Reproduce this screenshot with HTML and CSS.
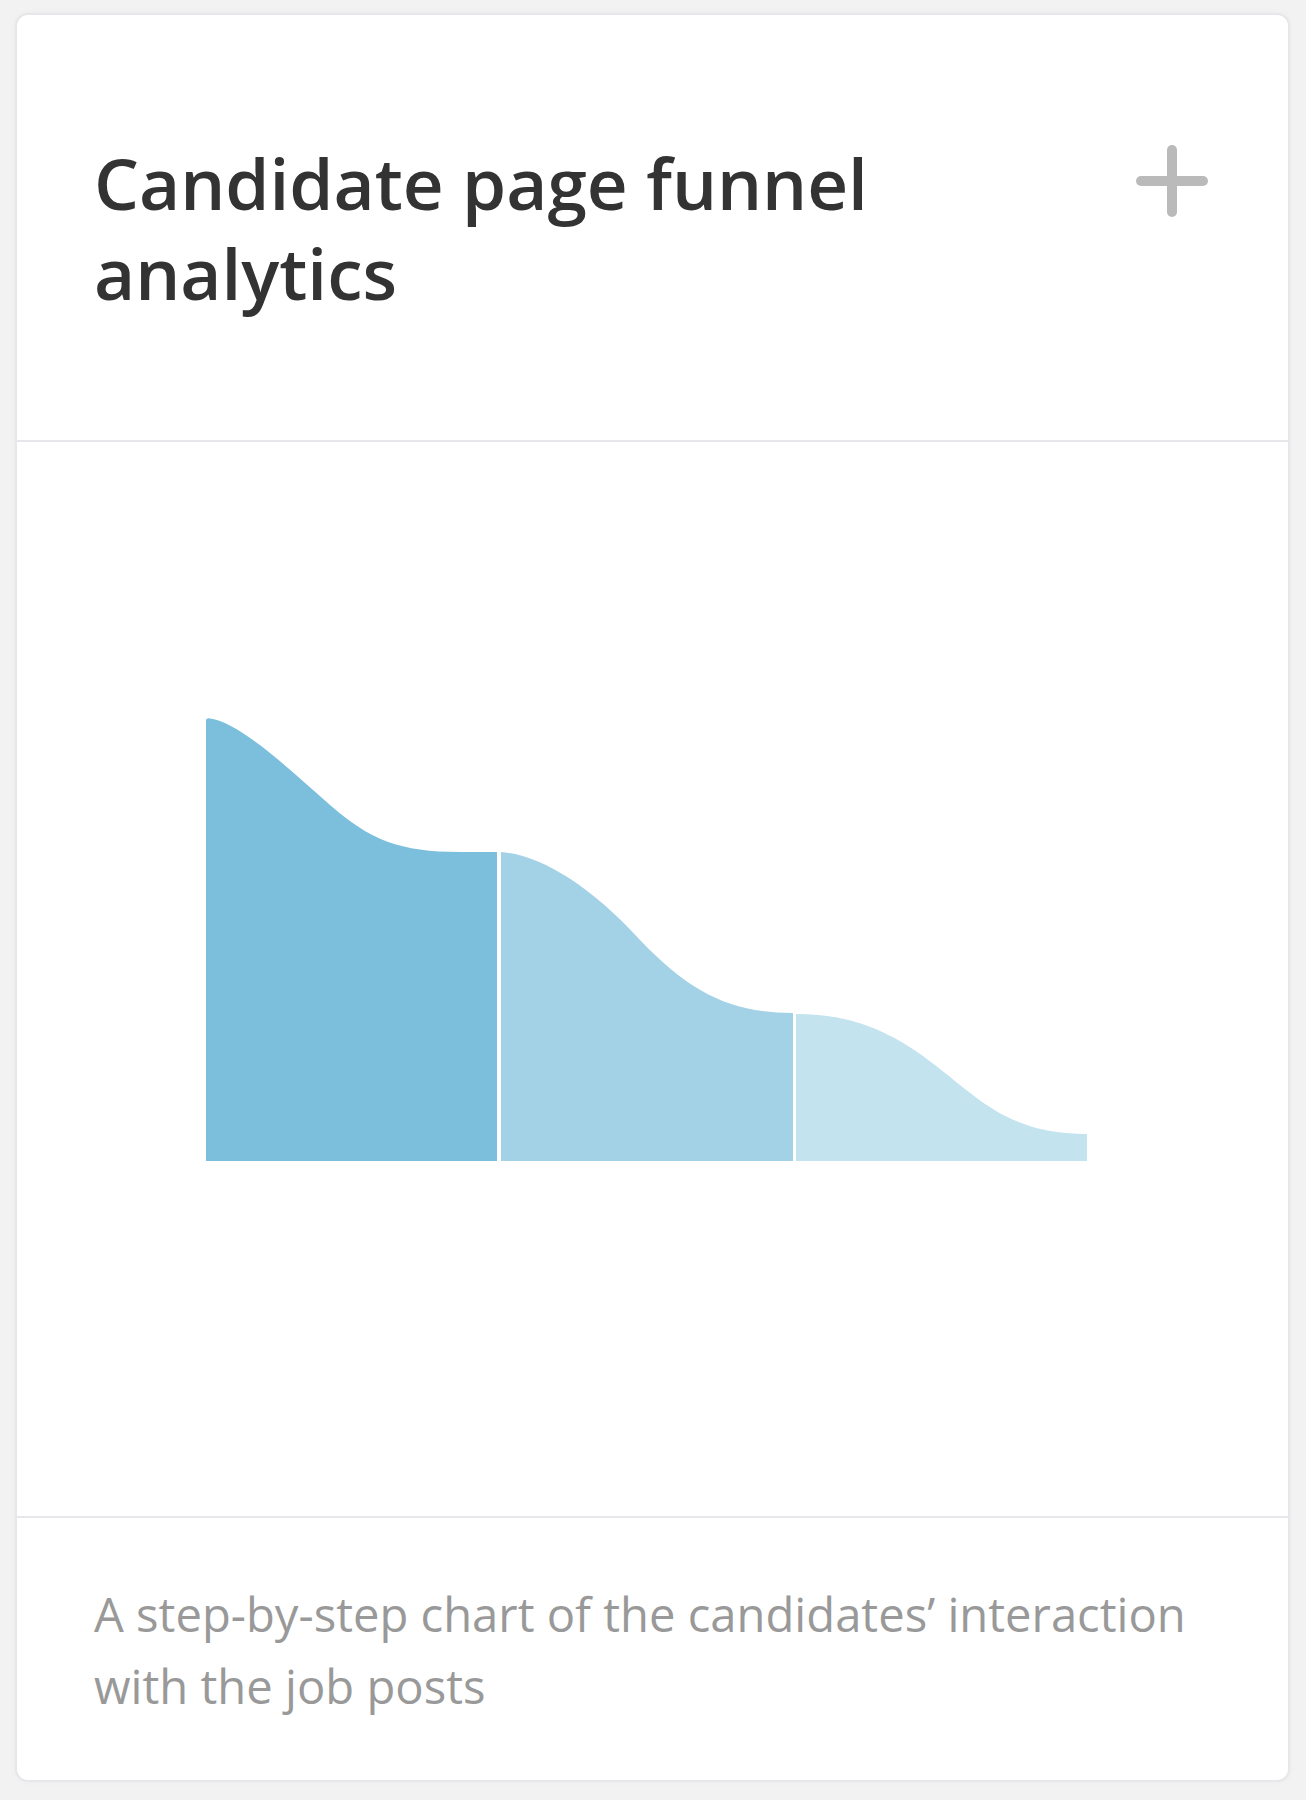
FILE: index.html
```html
<!DOCTYPE html>
<html lang="en">
<head>
    <meta charset="UTF-8">
    <meta name="viewport" content="width=device-width, initial-scale=1.0">
    <title>Candidate page funnel analytics</title>
    <link rel="stylesheet" href="styles.css">
</head>
<body>
    <div class="card">
        <div class="card-header">
            <h1 class="card-title">Candidate page funnel analytics</h1>
            <button class="add-button" aria-label="Add">
                <svg width="72" height="72" viewBox="0 0 72 72">
                    <line x1="5" y1="36" x2="67" y2="36" />
                    <line x1="36" y1="5" x2="36" y2="67" />
                </svg>
            </button>
        </div>

        <div class="card-chart">
            <svg class="funnel" width="882" height="444" viewBox="0 0 882 444">
                <path class="step-1" d="M0,443 L0,3 Q0,0 3,0.3 C34,4 84,52 124,87 C164,122 194,134 254,134 L291,134 L291,443 Z" />
                <path class="step-2" d="M295,443 L295,134 C334,137 384,167 434,222 C484,274 524,295 587,295 L587,443 Z" />
                <path class="step-3" d="M590,443 L590,296 C644,296 684,312 729,347 C774,382 804,416 881,416 L881,443 Z" />
            </svg>
        </div>

        <div class="card-footer">
            <p class="card-description">A step-by-step chart of the candidates’ interaction with the job posts</p>
        </div>
    </div>
</body>
</html>
```

FILE: styles.css
```css
body {
    font-family: 'Open Sans', sans-serif;
    background-color: #f2f2f2;
    margin: 0;
    padding: 13px 16px 20px 15px;
}

.card {
    background-color: #fff;
    border: 2px solid #e6e6eb;
    border-radius: 13px;
    box-shadow: 0 0 6px rgba(0, 0, 0, 0.03);
}

.card-header {
    display: flex;
    justify-content: space-between;
    align-items: flex-start;
    gap: 40px;
    padding: 123px 80px 122px 77px;
    border-bottom: 2px solid #e6e6eb;
}

.card-title {
    margin: 0;
    font-size: 71px;
    font-weight: 600;
    line-height: 90px;
    color: #333;
}

.add-button {
    flex-shrink: 0;
    margin-top: 7px;
    padding: 0;
    border: none;
    background: none;
    cursor: pointer;
    line-height: 0;
}

.add-button line {
    stroke: #bababa;
    stroke-width: 10;
    stroke-linecap: round;
}

.card-chart {
    box-sizing: border-box;
    height: 1076px;
    padding: 276px 0 0 189px;
    border-bottom: 2px solid #e6e6eb;
}

.funnel {
    display: block;
}

.step-1 { fill: #7bbfdc; }
.step-2 { fill: #a3d2e7; }
.step-3 { fill: #c3e3ef; }

.card-footer {
    padding: 60px 77px 58px 77px;
}

.card-description {
    margin: 0;
    font-size: 47.2px;
    line-height: 72px;
    color: #999;
}
```
